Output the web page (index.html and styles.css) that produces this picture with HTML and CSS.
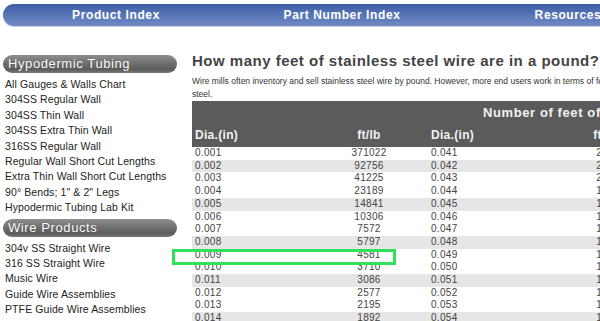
FILE: index.html
```html
<!DOCTYPE html>
<html lang="en">

<head>
    <meta charset="UTF-8">
    <meta name="viewport" content="width=device-width, initial-scale=1.0">
    <title>Stainless Steel Wire Feet per Pound</title>
    <link rel="stylesheet" href="styles.css">
</head>

<body>
    <div class="nav">
        <ul>
            <li>Product Index</li>
            <li>Part Number Index</li>
            <li>Resources</li>
        </ul>
    </div>

    <div class="page">
        <div class="side">
            <h3 class="side-title">Hypodermic Tubing</h3>
            <ul class="side-list">
                <li>All Gauges &amp; Walls Chart</li>
                <li>304SS Regular Wall</li>
                <li>304SS Thin Wall</li>
                <li>304SS Extra Thin Wall</li>
                <li>316SS Regular Wall</li>
                <li>Regular Wall Short Cut Lengths</li>
                <li>Extra Thin Wall Short Cut Lengths</li>
                <li>90&deg; Bends; 1" &amp; 2" Legs</li>
                <li>Hypodermic Tubing Lab Kit</li>
            </ul>
            <h3 class="side-title">Wire Products</h3>
            <ul class="side-list">
                <li>304v SS Straight Wire</li>
                <li>316 SS Straight Wire</li>
                <li>Music Wire</li>
                <li>Guide Wire Assemblies</li>
                <li>PTFE Guide Wire Assemblies</li>
            </ul>
        </div>

        <div class="main">
            <h1>How many feet of stainless steel wire are in a pound?</h1>
            <p class="intro">Wire mills often inventory and sell stainless steel wire by pound. However, more end users work in terms of feet or inches. This chart shows the number of feet per pound of stainless steel.</p>

            <div class="table-wrap">
                <table class="chart">
                    <thead>
                        <tr class="top">
                            <th colspan="4">Number of feet of stainless steel wire per pound</th>
                        </tr>
                        <tr>
                            <th class="dia">Dia.(in)</th>
                            <th class="ft">ft/lb</th>
                            <th class="dia">Dia.(in)</th>
                            <th class="ft">ft/lb</th>
                        </tr>
                    </thead>
                    <tbody>
                        <tr><td>0.001</td><td>371022</td><td>0.041</td><td>221</td></tr>
                        <tr class="band"><td>0.002</td><td>92756</td><td>0.042</td><td>210</td></tr>
                        <tr><td>0.003</td><td>41225</td><td>0.043</td><td>201</td></tr>
                        <tr><td>0.004</td><td>23189</td><td>0.044</td><td>192</td></tr>
                        <tr class="band"><td>0.005</td><td>14841</td><td>0.045</td><td>183</td></tr>
                        <tr><td>0.006</td><td>10306</td><td>0.046</td><td>175</td></tr>
                        <tr><td>0.007</td><td>7572</td><td>0.047</td><td>168</td></tr>
                        <tr class="band"><td>0.008</td><td>5797</td><td>0.048</td><td>161</td></tr>
                        <tr><td>0.009</td><td>4581</td><td>0.049</td><td>155</td></tr>
                        <tr><td>0.010</td><td>3710</td><td>0.050</td><td>148</td></tr>
                        <tr class="band"><td>0.011</td><td>3086</td><td>0.051</td><td>143</td></tr>
                        <tr><td>0.012</td><td>2577</td><td>0.052</td><td>137</td></tr>
                        <tr><td>0.013</td><td>2195</td><td>0.053</td><td>132</td></tr>
                        <tr class="band"><td>0.014</td><td>1892</td><td>0.054</td><td>127</td></tr>
                    </tbody>
                </table>
                <!-- highlighted row marker -->
                <div class="mark"></div>
            </div>
        </div>
    </div>
</body>

</html>
```

FILE: styles.css
```css
*{
    margin: 0;
    padding: 0;
}
html, body{
    overflow: hidden;
}
body{
    background-color: #fff;
    font-family: "Liberation Sans", Arial, sans-serif;
    color: #333;
    width: 900px;
}
li{
    list-style: none;
}

/* top menu */
.nav{
    margin: 4px 0 0 3px;
    height: 22px;
    border-radius: 11px 0 0 11px;
    background: linear-gradient(to bottom, #3d5ca4 0%, #5473b6 45%, #7189c5 100%);
    box-shadow: 0 1px 0 #c3cce3;
}
.nav ul{
    display: flex;
}
.nav li{
    width: 226px;
    text-align: center;
    line-height: 22px;
    color: #fff;
    font-size: 12px;
    font-weight: bold;
    letter-spacing: 0.6px;
}

.page{
    display: flex;
    margin: 24px 0 0 3px;
    gap: 15px;
}

/* left menu */
.side{
    width: 174px;
    flex: none;
    padding-top: 5px;
}
.side-title{
    height: 18px;
    line-height: 18px;
    border-radius: 9px;
    background: linear-gradient(to bottom, #8e8e8e 0%, #6a6a6a 55%, #5c5c5c 80%, #777 100%);
    color: #fff;
    font-size: 13px;
    font-weight: normal;
    letter-spacing: 0.6px;
    padding-left: 5px;
    text-shadow: 0 0 1px #444;
    margin-bottom: 4px;
}
.side-list{
    margin-bottom: 3px;
}
.side-list li{
    font-size: 10.5px;
    line-height: 15.4px;
    color: #222;
    letter-spacing: 0.1px;
    padding-left: 2px;
    white-space: nowrap;
}

/* content */
.main{
    flex: none;
    width: 700px;
}
.main h1{
    font-size: 15px;
    line-height: 18px;
    color: #444;
    letter-spacing: 0.5px;
    margin-top: 2px;
}
.intro{
    font-size: 8.5px;
    line-height: 13px;
    color: #333;
    margin: 5px 0 0;
    width: 698px;
}

.table-wrap{
    position: relative;
}
.chart{
    border-collapse: collapse;
    width: 472px;
    table-layout: fixed;
}
.chart th{
    background-color: #5b5b5b;
    color: #f2f2f2;
    font-weight: bold;
}
.chart .top th{
    height: 22px;
    font-size: 13px;
    text-align: left;
    padding-left: 291px;
    letter-spacing: 0.6px;
    white-space: nowrap;
}
.chart th.dia, .chart th.ft{
    width: 118px;
    height: 24px;
    font-size: 12px;
    letter-spacing: 0.3px;
}
.chart th.dia{
    text-align: left;
    padding-left: 3px;
}
.chart td{
    font-size: 10px;
    line-height: 12.7px;
    color: #444;
    letter-spacing: 0.3px;
}
.chart td:nth-child(odd){
    padding-left: 3px;
}
.chart td:nth-child(even){
    text-align: center;
}
.chart .band td{
    background-color: #e6e6e6;
}

.mark{
    position: absolute;
    left: -20px;
    top: 148px;
    width: 218px;
    height: 10px;
    border: 3px solid #2fe25a;
}
```
